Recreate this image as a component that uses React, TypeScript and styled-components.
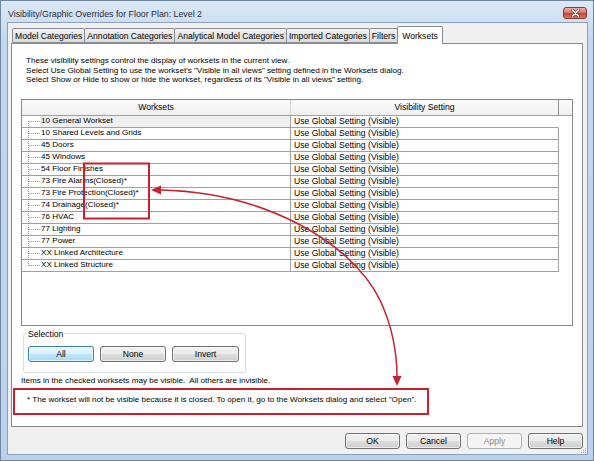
import React from 'react';
import styled, { createGlobalStyle } from 'styled-components';

const GlobalStyle = createGlobalStyle`
  html, body {
    margin: 0;
    padding: 0;
    background: #ffffff;
  }
  body {
    font-family: "Liberation Sans", Arial, sans-serif;
    font-size: 8.6px;
    color: #000;
  }
  * {
    box-sizing: border-box;
  }
`;

const Window = styled.div`
  position: relative;
  width: 594px;
  height: 461px;
  display: flex;
  flex-direction: column;
  padding: 0 5px 5px 6px;
  border: 1px solid #70869f;
  background: linear-gradient(#dce8f5, #c3d7ee 40px, #bcd2ec);
`;

const TitleBar = styled.div`
  height: 21px;
  display: flex;
  align-items: flex-start;
  justify-content: space-between;
`;

const Title = styled.span`
  margin: 8px 0 0 1px;
  font-size: 8.8px;
  line-height: 10px;
  color: #1e2a3a;
`;

const CloseButton = styled.div`
  width: 24px;
  height: 12px;
  margin: 6px 1px 0 0;
  display: flex;
  align-items: center;
  justify-content: center;
  border: 1px solid #8c3b33;
  border-radius: 3px;
  background: linear-gradient(#eab2a6, #d9766a 45%, #c4473b 55%, #d7765f);
`;

const Client = styled.div`
  position: relative;
  flex: 1;
  display: flex;
  flex-direction: column;
  padding: 3px 4px 5px 3px;
  border: 1px solid #8aa1bd;
  background: #f0f0f0;
`;

const TabStrip = styled.div`
  height: 17px;
  display: flex;
  align-items: flex-end;
  padding-left: 2px;
`;

const Tab = styled.div<{ $active?: boolean }>`
  position: relative;
  height: ${(p) => (p.$active ? '18px' : '15px')};
  margin-bottom: ${(p) => (p.$active ? '-1px' : '0')};
  margin-left: -1px;
  padding: ${(p) => (p.$active ? '0 4px' : '0 2px')};
  display: flex;
  align-items: center;
  border: 1px solid #898c95;
  border-bottom: ${(p) => (p.$active ? 'none' : '1px solid #898c95')};
  border-radius: 2px 2px 0 0;
  background: ${(p) => (p.$active ? '#ffffff' : 'linear-gradient(#f3f3f3, #e6e6e6 50%, #dcdcdc)')};
  line-height: 10px;
  z-index: ${(p) => (p.$active ? 1 : 0)};
  white-space: nowrap;
`;

const Panel = styled.div`
  flex: 1;
  display: flex;
  flex-direction: column;
  padding: 0 9px;
  border: 1px solid #898c95;
  background: #ffffff;
`;

const Description = styled.div`
  margin-top: 12px;
  padding-left: 5px;
  font-size: 8.1px;
  line-height: 9.5px;
`;

const Grid = styled.div`
  height: 227px;
  margin-top: 14px;
  display: flex;
  flex-direction: column;
  border: 1px solid #828790;
  background: #ffffff;
`;

const HeaderRow = styled.div`
  height: 16px;
  display: grid;
  grid-template-columns: 269px 268px 1fr;
  border-bottom: 1px solid #a0a0a0;
  background: linear-gradient(#fafafa, #f0f0f0);
`;

const HeaderCell = styled.div<{ $dark?: boolean }>`
  display: flex;
  align-items: center;
  justify-content: center;
  border-right: 1px solid ${(p) => (p.$dark ? '#8e8e8e' : '#d5d5d5')};
  line-height: 10px;
`;

const HeaderFiller = styled.div``;

const Row = styled.div`
  height: 12px;
  display: grid;
  grid-template-columns: 269px 268px 1fr;
`;

const NameCell = styled.div`
  display: flex;
  align-items: stretch;
  border-right: 1px solid #a0a0a0;
  border-bottom: 1px solid #a0a0a0;
`;

const Tree = styled.div<{ $first?: boolean; $last?: boolean }>`
  position: relative;
  width: 18px;
  flex: none;

  &::before {
    content: '';
    position: absolute;
    left: 6px;
    top: ${(p) => (p.$first ? '5px' : '-1px')};
    bottom: ${(p) => (p.$last ? '5px' : '-1px')};
    border-left: 1px dotted #9a9a9a;
  }

  &::after {
    content: '';
    position: absolute;
    left: 7px;
    width: 11px;
    top: 5px;
    border-top: 1px dotted #9a9a9a;
  }
`;

const NameLabel = styled.div<{ $current?: boolean }>`
  flex: 1;
  display: flex;
  align-items: center;
  padding-left: 1px;
  font-size: 8.1px;
  line-height: 10px;
  background: ${(p) => (p.$current ? '#efefef' : 'transparent')};
  white-space: nowrap;
`;

const SettingCell = styled.div<{ $current?: boolean }>`
  display: flex;
  align-items: center;
  padding-left: 3px;
  border-right: 1px solid ${(p) => (p.$current ? 'transparent' : '#a0a0a0')};
  border-bottom: 1px solid #a0a0a0;
  line-height: 10px;
  white-space: nowrap;
`;

const GroupBox = styled.fieldset`
  width: 223px;
  margin: 3px 0 0 2px;
  padding: 0 0 10px 0;
  border: 1px solid #d5dfe5;
  border-radius: 3px;
`;

const GroupLabel = styled.legend`
  margin-left: 3px;
  padding: 0 1px;
  line-height: 10px;
`;

const ButtonRow = styled.div`
  display: flex;
  gap: 6px;
  padding: 7px 0 0 4px;
`;

const Button = styled.button<{ $width: number; $default?: boolean }>`
  width: ${(p) => p.$width}px;
  height: 16px;
  padding: 0;
  font-family: inherit;
  font-size: 8.6px;
  line-height: 10px;
  color: #000;
  border: 1px solid ${(p) => (p.$default ? '#3c7fb1' : '#707070')};
  border-radius: 3px;
  background: ${(p) =>
    p.$default
      ? 'linear-gradient(#eaf6fd, #d9f0fc 50%, #bee6fd 50%, #a7d9f5)'
      : 'linear-gradient(#f2f2f2, #ebebeb 50%, #dddddd 50%, #cfcfcf)'};
  box-shadow: inset 0 0 0 1px rgba(255, 255, 255, 0.6);

  &:disabled {
    color: #8d8d8d;
    border-color: #adb2b5;
    background: #f4f4f4;
    box-shadow: none;
  }
`;

const Note = styled.div`
  margin-top: 3px;
  font-size: 8.1px;
  line-height: 10px;
`;

const FootNote = styled.div`
  width: 416px;
  height: 27px;
  margin: 2px 0 0 -8px;
  padding: 5px 0 0 12px;
  border: 2px solid #c8202e;
  font-size: 8.1px;
  line-height: 10px;
  white-space: nowrap;
`;

const ButtonBar = styled.div`
  display: flex;
  justify-content: flex-end;
  gap: 6px;
  margin-top: 6px;
`;

const Grip = styled.svg`
  position: absolute;
  right: 0;
  bottom: 0;
`;

const Overlay = styled.svg`
  position: absolute;
  top: -1px;
  left: -1px;
  pointer-events: none;
`;

const worksets = [
  '10 General Workset',
  '10 Shared Levels and Grids',
  '45 Doors',
  '45 Windows',
  '54 Floor Finishes',
  '73 Fire Alarms(Closed)*',
  '73 Fire Protection(Closed)*',
  '74 Drainage(Closed)*',
  '76 HVAC',
  '77 Lighting',
  '77 Power',
  'XX Linked Architecture',
  'XX Linked Structure',
];

const tabs = [
  'Model Categories',
  'Annotation Categories',
  'Analytical Model Categories',
  'Imported Categories',
  'Filters',
  'Worksets',
];

const RED = '#c8202e';

const App: React.FC = () => {
  return (
    <>
      <GlobalStyle />
      <Window>
        <TitleBar>
          <Title>Visibility/Graphic Overrides for Floor Plan: Level 2</Title>
          <CloseButton>
            <svg width="9" height="8" viewBox="0 0 9 8">
              <path d="M1.5 1 L7.5 7 M7.5 1 L1.5 7" stroke="#6b2a22" strokeWidth="2.6" strokeLinecap="round" />
              <path d="M1.5 1 L7.5 7 M7.5 1 L1.5 7" stroke="#ffffff" strokeWidth="1.6" strokeLinecap="round" />
            </svg>
          </CloseButton>
        </TitleBar>

        <Client>
          <TabStrip>
            {tabs.map((t) => (
              <Tab key={t} $active={t === 'Worksets'}>{t}</Tab>
            ))}
          </TabStrip>

          <Panel>
            <Description>
              These visibility settings control the display of worksets in the current view.
              <br />
              Select Use Global Setting to use the workset's "Visible in all views" setting defined in the Worksets dialog.
              <br />
              Select Show or Hide to show or hide the workset, regardless of its "Visible in all views" setting.
            </Description>

            <Grid>
              <HeaderRow>
                <HeaderCell>Worksets</HeaderCell>
                <HeaderCell $dark>Visibility Setting</HeaderCell>
                <HeaderFiller />
              </HeaderRow>
              {worksets.map((w, i) => (
                <Row key={w}>
                  <NameCell>
                    <Tree $first={i === 0} $last={i === worksets.length - 1} />
                    <NameLabel $current={i === 0}>{w}</NameLabel>
                  </NameCell>
                  <SettingCell $current={i === 0}>Use Global Setting (Visible)</SettingCell>
                  <div />
                </Row>
              ))}
            </Grid>

            <GroupBox>
              <GroupLabel>Selection</GroupLabel>
              <ButtonRow>
                <Button $width={66} $default>All</Button>
                <Button $width={66}>None</Button>
                <Button $width={67}>Invert</Button>
              </ButtonRow>
            </GroupBox>

            <Note>Items in the checked worksets may be visible.&nbsp; All others are invisible.</Note>

            <FootNote>
              * The workset will not be visible because it is closed. To open it, go to the Worksets dialog and select "Open".
            </FootNote>
          </Panel>

          <ButtonBar>
            <Button $width={55}>OK</Button>
            <Button $width={55}>Cancel</Button>
            <Button $width={55} disabled>Apply</Button>
            <Button $width={55}>Help</Button>
          </ButtonBar>

          <Grip width="8" height="8" viewBox="0 0 8 8">
            {[[6, 2], [6, 4], [4, 4], [6, 6], [4, 6], [2, 6]].map(([x, y]) => (
              <rect key={`${x}-${y}`} x={x} y={y} width="1" height="1" fill="#a8a8a8" />
            ))}
          </Grip>
        </Client>

        <Overlay width="594" height="461" viewBox="0 0 594 461">
          <rect x="84" y="163.5" width="65" height="55" fill="none" stroke={RED} strokeWidth="2" />
          <path
            d="M160 190 C 262 192, 350 240, 380 300 C 393 328, 397 352, 397 377"
            fill="none"
            stroke={RED}
            strokeWidth="1.5"
          />
          <polygon points="151,190 161,185.5 161,194.5" fill={RED} />
          <polygon points="397,386 392.5,376 401.5,376" fill={RED} />
        </Overlay>
      </Window>
    </>
  );
};

export default App;
